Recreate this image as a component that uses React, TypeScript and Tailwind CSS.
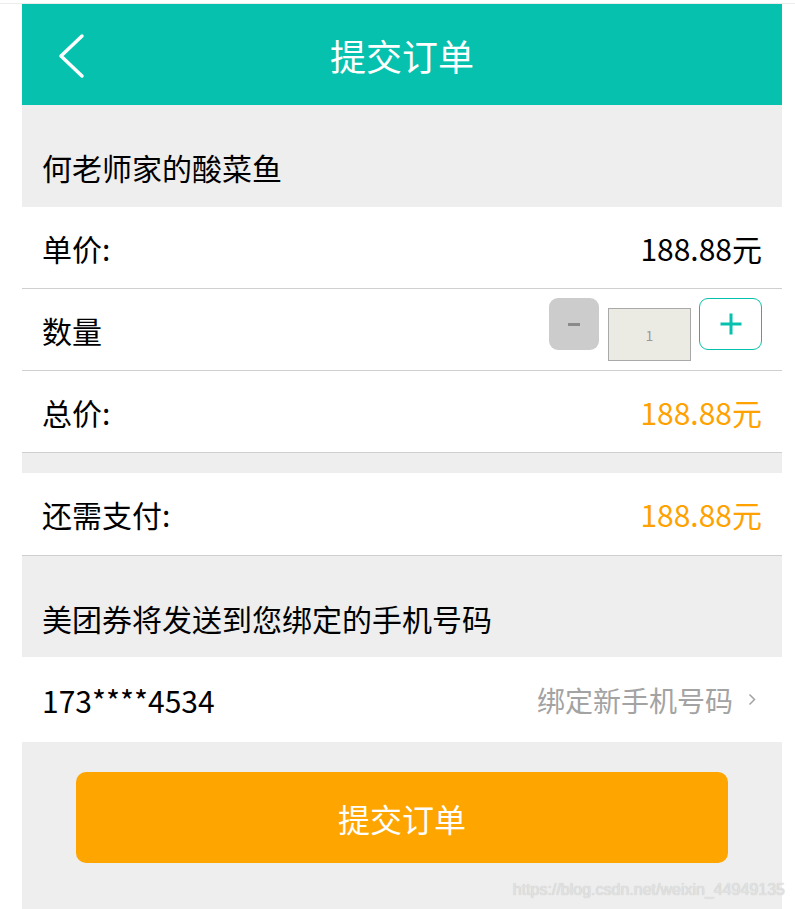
import React from 'react'

const rowCls =
  'flex h-[82px] items-center justify-between border-b border-[#cfcfcf] bg-white px-[20px] text-[30px] leading-[36px] text-black'

function BackIcon() {
  return (
    <svg width="28" height="46" viewBox="0 0 28 46" fill="none">
      <polyline
        points="24,3 3,23 24,43"
        stroke="#ffffff"
        strokeWidth="3.5"
        strokeLinecap="round"
        strokeLinejoin="round"
      />
    </svg>
  )
}

function Stepper() {
  return (
    <div className="flex items-start">
      <button className="flex h-[52px] w-[50px] items-center justify-center rounded-[9px] bg-[#cccccc]">
        <span className="block h-[3px] w-[12px] bg-[#8a8a8a]" />
      </button>
      <div className="ml-[9px] mt-[10px] flex h-[53px] w-[83px] items-center justify-center border border-[#a9a9a9] bg-[#ebebe4] text-[14px] text-[#9a9a9a]">
        1
      </div>
      <button className="ml-[8px] flex h-[52px] w-[63px] items-center justify-center rounded-[9px] border border-[#06c1ae] bg-white">
        <svg width="24" height="24" viewBox="0 0 24 24">
          <path d="M12 1.5v21M1.5 12h21" stroke="#06c1ae" strokeWidth="3" />
        </svg>
      </button>
    </div>
  )
}

export default function App() {
  return (
    <div
      className="relative h-[909px] w-[795px] overflow-hidden bg-white"
      style={{ fontFamily: '"Noto Sans CJK SC", "Noto Sans", sans-serif' }}
    >
      <div className="h-[3px]" />
      <div className="h-px bg-[#ececec]" />
      <div className="ml-[22px] flex h-[905px] w-[760px] flex-col bg-[#eeeeee]">
        <div className="grid h-[101px] shrink-0 grid-cols-[1fr_auto_1fr] items-center bg-[#06c1ae]">
          <div className="pl-[36px] pt-[2px]">
            <BackIcon />
          </div>
          <div className="text-[36px] leading-[40px] text-white">提交订单</div>
          <div />
        </div>

        <div className="flex h-[102px] shrink-0 items-end px-[20px] pb-[22px] text-[30px] leading-[36px] text-black">
          何老师家的酸菜鱼
        </div>

        <div className={rowCls}>
          <span>单价:</span>
          <span>188.88元</span>
        </div>
        <div className={rowCls}>
          <span>数量</span>
          <Stepper />
        </div>
        <div className={rowCls}>
          <span>总价:</span>
          <span className="text-[#ffa200]">188.88元</span>
        </div>

        <div className="h-[20px] shrink-0" />

        <div className={rowCls + ' h-[83px]'}>
          <span>还需支付:</span>
          <span className="text-[#ffa200]">188.88元</span>
        </div>

        <div className="flex h-[101px] shrink-0 items-end px-[20px] pb-[21px] text-[30px] leading-[36px] text-black">
          美团券将发送到您绑定的手机号码
        </div>

        <div className="flex h-[85px] shrink-0 items-center justify-between bg-white pl-[20px] pr-[26px] text-[28px] leading-[36px]">
          <span className="text-[30px] text-black">173****4534</span>
          <span className="flex items-center text-[#a3a3a3]">
            绑定新手机号码
            <svg className="ml-[15px]" width="8" height="13" viewBox="0 0 8 13" fill="none">
              <polyline points="1.5,1.5 6.5,6.5 1.5,11.5" stroke="#a3a3a3" strokeWidth="1.5" />
            </svg>
          </span>
        </div>

        <div className="flex flex-1 justify-center pt-[30px]">
          <button className="flex h-[91px] w-[652px] items-center justify-center rounded-[10px] bg-[#ffa500] text-[32px] leading-[36px] text-white">
            提交订单
          </button>
        </div>
      </div>

      <div
        className="absolute bottom-[10px] right-[10px] text-[16px] leading-[18px] text-[#e2e2e2]"
        style={{ fontFamily: '"Liberation Sans", Arial, sans-serif', textShadow: '0 0 1px #bdbdbd' }}
      >
        https://blog.csdn.net/weixin_44949135
      </div>
    </div>
  )
}
